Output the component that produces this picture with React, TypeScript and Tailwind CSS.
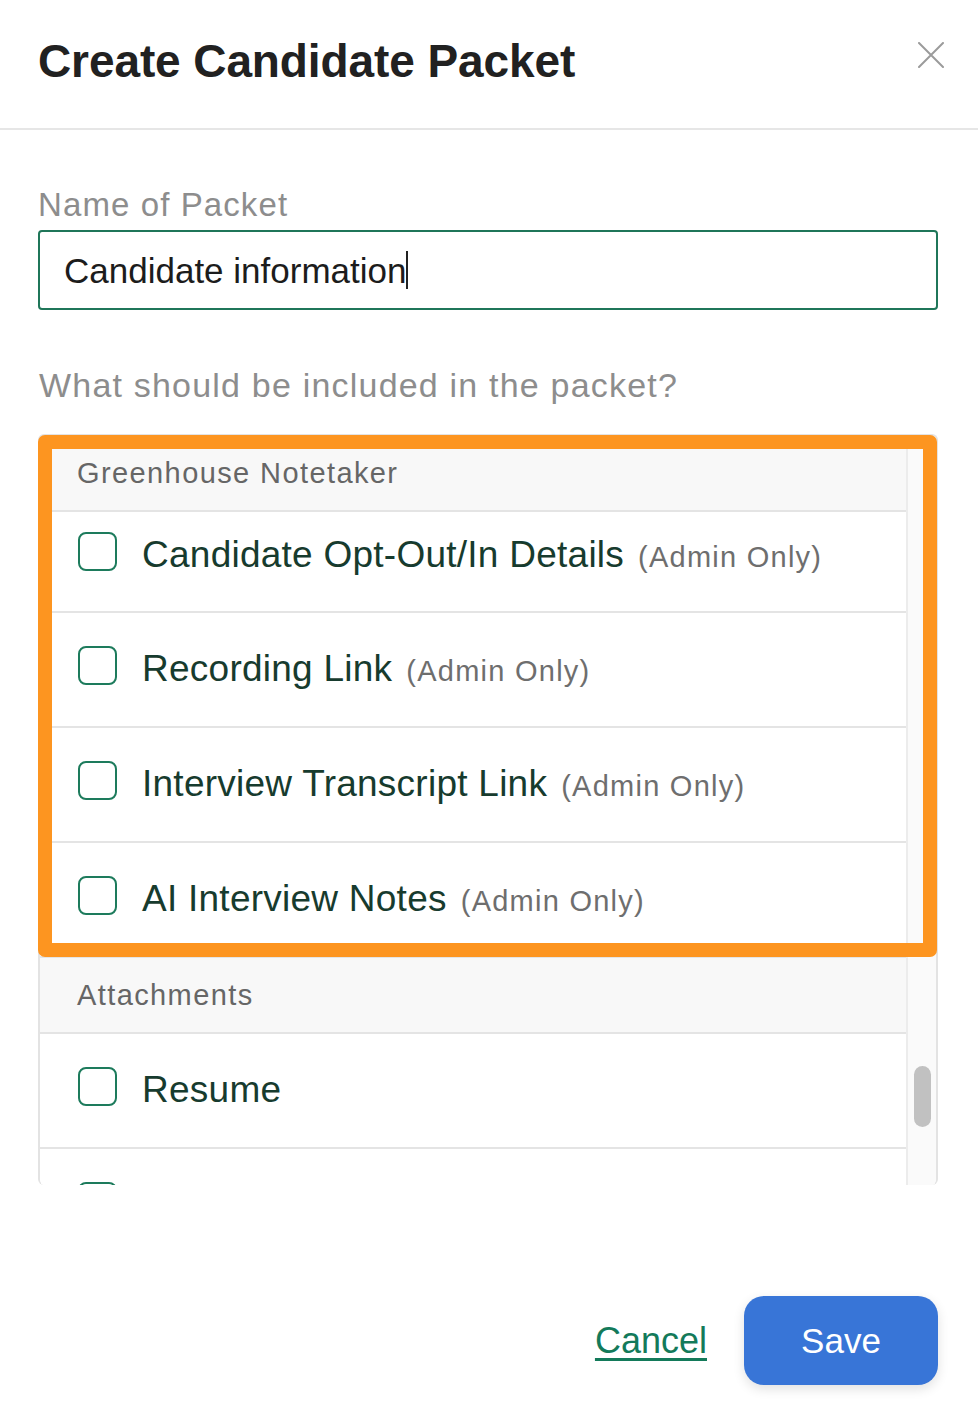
import React from "react";

type Item = { label: string; admin?: boolean };

const notetakerItems: Item[] = [
  { label: "Candidate Opt-Out/In Details", admin: true },
  { label: "Recording Link", admin: true },
  { label: "Interview Transcript Link", admin: true },
  { label: "AI Interview Notes", admin: true },
];

const attachmentItems: Item[] = [{ label: "Resume" }, { label: "Cover Letter" }];

function Checkbox() {
  return (
    <span className="block h-[39px] w-[39px] shrink-0 rounded-[8px] border-2 border-[#1d7b5c] bg-white" />
  );
}

function ItemRow({ item, first }: { item: Item; first?: boolean }) {
  return (
    <div
      className={`flex items-center gap-[25px] border-b-2 border-[#e4e4e4] bg-white pl-[38px] ${
        first ? "h-[101px] pb-[20px]" : "h-[115px] pb-[8px]"
      }`}
    >
      <Checkbox />
      <span className="mt-[5px] flex items-baseline gap-[14px] whitespace-nowrap">
        <span className="text-[37px] leading-none tracking-[0.25px] text-[#173b2e]">{item.label}</span>
        {item.admin && (
          <span className="text-[29px] leading-none tracking-[1.25px] text-[#6e6e6e]">
            (Admin Only)
          </span>
        )}
      </span>
    </div>
  );
}

function GroupHeader({ title }: { title: string }) {
  return (
    <div className="flex h-[76px] items-center border-b-2 border-[#e4e4e4] bg-[#f8f8f8] pl-[37px]">
      <span className="text-[29px] leading-none tracking-[1.4px] text-[#666666]">{title}</span>
    </div>
  );
}

export default function App() {
  return (
    <div className="min-h-[1422px] w-full bg-white font-['Liberation_Sans',Arial,sans-serif]">
      {/* Dialog header */}
      <div className="flex items-start justify-between border-b-2 border-[#e6e6e6] pb-[44px] pl-[38px] pr-[34px] pt-[38px]">
        <h1 className="text-[46px] font-bold leading-none tracking-[-0.1px] text-[#212121]">
          Create Candidate Packet
        </h1>
        <button className="mt-[4px]" aria-label="Close">
          <svg width="26" height="26" viewBox="0 0 26 26" fill="none">
            <path d="M1 1L25 25M25 1L1 25" stroke="#9b9b9b" strokeWidth="2" strokeLinecap="round" />
          </svg>
        </button>
      </div>

      {/* Form body */}
      <div className="pl-[38px] pr-[40px] pt-[58px]">
        <label className="block text-[33px] leading-none tracking-[1.1px] text-[#8d8d8d]">
          Name of Packet
        </label>
        <div className="mt-[9px] flex h-[80px] items-center rounded-[4px] border-2 border-[#1f7659] bg-white pl-[24px]">
          <span className="text-[35px] leading-none text-[#1c1c1c]">Candidate information</span>
          <span className="h-[38px] w-[2px] bg-[#222222]" />
        </div>

        <p className="ml-[1px] mt-[58px] text-[34px] leading-none tracking-[1.2px] text-[#8d8d8d]">
          What should be included in the packet?
        </p>

        {/* Scrollable list of packet contents */}
        <div className="relative mt-[32px]">
          <div className="flex h-[751px] overflow-hidden rounded-[6px] border-x-2 border-t-2 border-[#e3e3e3]">
            <div className="flex-1">
              <GroupHeader title="Greenhouse Notetaker" />
              {notetakerItems.map((item, i) => (
                <ItemRow key={item.label} item={item} first={i === 0} />
              ))}
              <GroupHeader title="Attachments" />
              {attachmentItems.map((item) => (
                <ItemRow key={item.label} item={item} />
              ))}
            </div>
            <div className="flex w-[30px] shrink-0 flex-col items-center border-l-2 border-[#ececec] bg-[#fafafa] pt-[630px]">
              <div className="h-[61px] w-[17px] rounded-full bg-[#c1c1c1]" />
            </div>
          </div>
          {/* Highlight frame around the Notetaker group */}
          <div className="pointer-events-none absolute left-0 right-[1px] top-[1px] h-[522px] rounded-[7px] border-[14px] border-[#fd9520]" />
        </div>

        {/* Footer actions */}
        <div className="mt-[111px] flex items-center justify-end gap-[37px]">
          <a
            href="#"
            className="text-[36px] leading-none text-[#137a5a] underline decoration-[3px] underline-offset-[5px]"
          >
            Cancel
          </a>
          <button className="flex h-[89px] w-[194px] items-center justify-center rounded-[20px] bg-[#3875d7] text-[35px] leading-none text-white shadow-[0_4px_12px_rgba(0,0,0,0.12)]">
            Save
          </button>
        </div>
      </div>
    </div>
  );
}
